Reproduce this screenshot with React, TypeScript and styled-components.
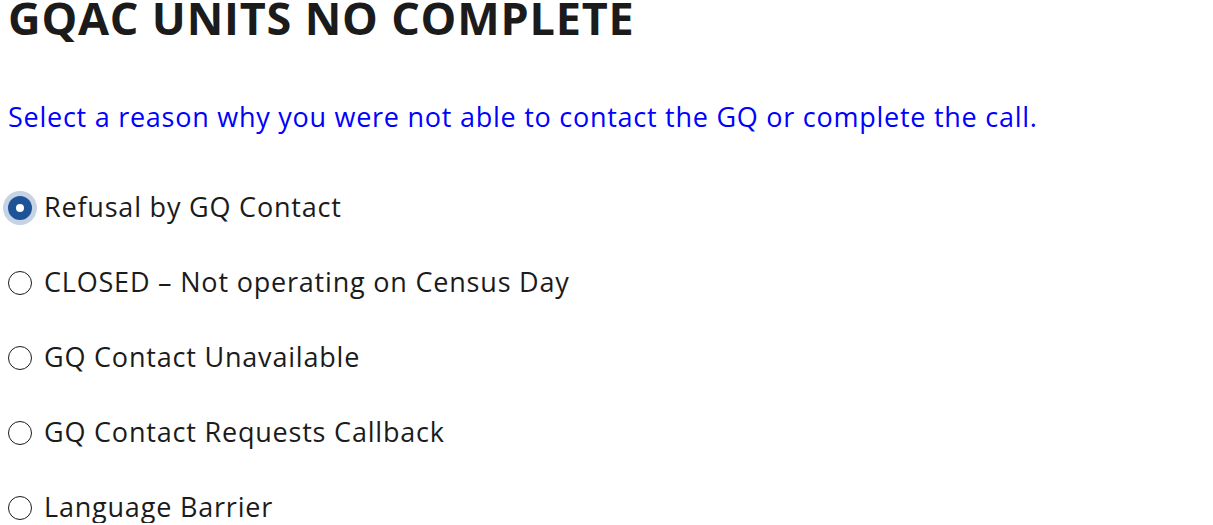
import React, { useState } from "react";
import styled, { createGlobalStyle } from "styled-components";

const Global = createGlobalStyle`
  html, body { margin: 0; padding: 0; background: #ffffff; }
  body { font-family: "Open Sans", "Noto Sans", sans-serif; color: #1b1b1b; }
`;

const Page = styled.main`
  padding: 0 8px;
  display: flex;
  flex-direction: column;
`;

const Title = styled.h1`
  margin: -8px 0 0 0;
  font-size: 45px;
  font-weight: 700;
  line-height: 52px;
  color: #1b1b1b;
  letter-spacing: 0.8px;
  white-space: nowrap;
`;

const Prompt = styled.p`
  margin: 57px 0 0 0;
  font-size: 27px;
  line-height: 32px;
  letter-spacing: 0.74px;
  color: #0000ff;
  white-space: nowrap;
`;

const Options = styled.div`
  display: flex;
  flex-direction: column;
  gap: 43px;
  margin-top: 58px;
`;

const OptionRow = styled.label`
  display: flex;
  align-items: center;
  gap: 12px;
  font-size: 27px;
  line-height: 32px;
  letter-spacing: 0.8px;
  color: #1b1b1b;
  cursor: pointer;
  white-space: nowrap;
`;

const Radio = styled.input.attrs({ type: "radio" })`
  appearance: none;
  margin: 2px 0 0 0;
  width: 24px;
  height: 24px;
  border-radius: 50%;
  border: 1.5px solid #1b1b1b;
  background: #ffffff;
  box-sizing: border-box;
  flex-shrink: 0;
  &:checked {
    border: 8px solid #1f5398;
    background: #ffffff;
    box-shadow: 0 0 0 5px #c5d3e5;
  }
`;

const reasons = [
  "Refusal by GQ Contact",
  "CLOSED \u2013 Not operating on Census Day",
  "GQ Contact Unavailable",
  "GQ Contact Requests Callback",
  "Language Barrier",
];

export default function App() {
  const [sel, setSel] = useState(0);
  return (
    <>
      <Global />
      <Page>
        <Title>GQAC UNITS NO COMPLETE</Title>
        <Prompt>Select a reason why you were not able to contact the GQ or complete the call.</Prompt>
        <Options>
          {reasons.map((r, i) => (
            <OptionRow key={r}>
              <Radio name="reason" checked={sel === i} onChange={() => setSel(i)} />
              {r}
            </OptionRow>
          ))}
        </Options>
      </Page>
    </>
  );
}
